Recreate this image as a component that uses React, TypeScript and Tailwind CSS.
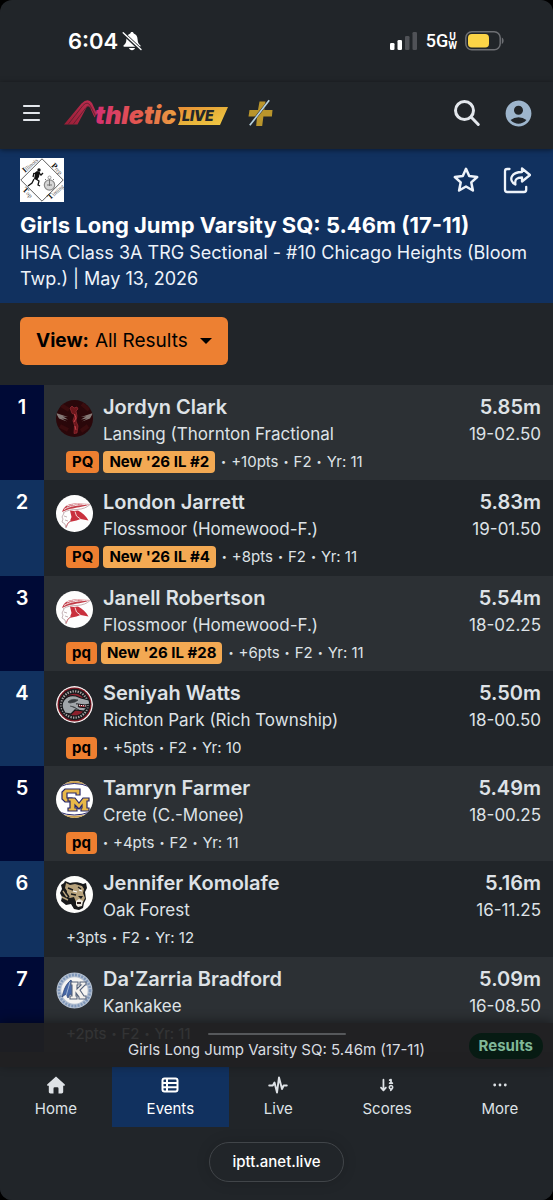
import { Fragment, useState } from "react";
import type { ReactNode } from "react";
import { MdAccountCircle } from "react-icons/md";
import { FaArrowDown19 } from "react-icons/fa6";

type Result = {
  place: number;
  name: string;
  school: string;
  metric: string;
  imperial: string;
  badge?: string;
  rank?: string;
  details: string[];
  logo: ReactNode;
};

function Avatar({ label, children }: { label: string; children: ReactNode }) {
  return (
    <svg viewBox="0 0 37 37" className="size-[37px] rounded-full" role="img" aria-label={label}>
      {children}
    </svg>
  );
}

function ThorntonLogo() {
  return (
    <Avatar label="Thornton Fractional">
      <rect width="37" height="37" fill="#2a070a" />
      <path d="M5 5l8 5M26 4l7 6M4 26l8 4M25 31l7-5" stroke="#3a0c0e" strokeWidth="4" />
      <path d="M14 8l2-2 2 2 3-1 1 2-2 2 1 5-1 5 2 5-1 7-3 .5.5-8-1.500-5 2-6-3-1z" fill="#6c161b" stroke="#a5333a" strokeWidth=".6" />
      <path d="M0 13l12 4-5-.5 5 3-6-1 5 3-8-3zM37 13l-12 4 5-.5-5 3 6-1-5 3 8-3z" fill="#857a77" />
      <path d="M18.500 14l1.500 4-2 4M19 26l1 4" stroke="#c8444c" fill="none" />
    </Avatar>
  );
}

function FlossmoorLogo() {
  return (
    <Avatar label="Homewood-Flossmoor">
      <rect width="37" height="37" fill="#fdfdfd" />
      <path d="M6 17C8 11 12 9 19 8.500L34 9C29 12 22 12 17 13.500 12 14 9 15.500 6 17z" fill="#c23b47" />
      <path d="M8 14.500C14 10.500 22 10 34 9M11 11c4-1.500 7-1.500 11-2" stroke="#f2dfe1" fill="none" strokeWidth="1" />
      <path d="M7 18c4-3 9-3.500 14-3.500 6-.5 10-2 13-5" stroke="#b99a9e" fill="none" strokeWidth=".8" />
      <path d="M14 15.500l4 .5 4-.5c4 2 8 5.500 10.500 10l-8-1.500-4 1.500-7 1.500 2-5z" fill="#c9303d" />
      <path d="M19 16.500l1.500 4.500 4 3" stroke="#f3d5d7" fill="none" />
      <path d="M8 18l-2 4 1 2-1 3 3 2 1 4 2-5 3-3M8 21l3 1M9 25l3 1" fill="none" stroke="#b5a0a3" strokeWidth=".8" />
      <path d="M10 32l2-4 3-2" stroke="#d0747c" fill="none" />
    </Avatar>
  );
}

function RichLogo() {
  return (
    <Avatar label="Rich Township High School">
      <circle cx="18.5" cy="18.5" r="18.5" fill="#f4eeee" />
      <circle cx="18.5" cy="18.5" r="17" fill="#7d1622" />
      <circle cx="18.5" cy="18.5" r="15.7" fill="#1a1a1d" />
      <circle cx="18.5" cy="18.5" r="13.2" fill="none" stroke="#a9a5a6" strokeWidth="2.200" strokeDasharray="1.300 1.300" />
      <circle cx="18.5" cy="18.5" r="10.8" fill="#8c1f2c" />
      <path d="M8 14c3-4 8-5 12-4l5 2 8 2 1 4-5 1-8-1 2 3 8 1-3 3-9-1-4 4-6-1c-3-4-4-9-1-13z" fill="#a1a6aa" stroke="#15171a" strokeWidth="1.2" />
      <path d="M12 16c3-3 6-3 10-2l-3 2-5 1zM14 20l4 1 5 3" fill="#383c40" stroke="#383c40" strokeWidth=".8" />
      <path d="M21 19l9 1" stroke="#fff" strokeDasharray="1 1" />
    </Avatar>
  );
}

function CreteLogo() {
  return (
    <Avatar label="Crete-Monee">
      <rect width="37" height="37" fill="#fff" />
      <path d="M3 3Q18-2 34 3M3 34q15 5 31 0" fill="none" stroke="#c9a04f" strokeWidth="3.400" />
      <path d="M3 6Q18-1 34 6M3 31q15 6 31 0" fill="none" stroke="#27256b" strokeWidth="1" />
      <path d="M9 8h15v6h-4v-2h-9v5h5v4H9l-3-3v-7z" fill="#e8b848" stroke="#28286a" strokeWidth="1.2" />
      <path d="M12 17h7l4 5 4-5h6v3h-2v7h2v3h-8v-3h1v-3l-3 4-4-4v3h2v3h-9v-3h2v-7h-2z" fill="#e8b848" stroke="#28286a" strokeWidth="1.2" />
    </Avatar>
  );
}

function OakForestLogo() {
  return (
    <Avatar label="Oak Forest">
      <rect width="37" height="37" fill="#fdfdfb" />
      <path d="M9 5l5 2c4-1 9-1 13 1l3-1 1 5-2 4 1 7-2 4-1 5-4 2-5-1-3-5-5 1-5-4 1-4-2-4 2-4-1-4 3-2z" fill="#18191a" />
      <path d="M10 7l4 2 5-1 7 2 2 3-1 4 2 5-2 4-4-2-3 2-2-5-4 1-4-2 1-5-2-3z" fill="#b7a27b" />
      <path d="M7 15l4 6M6 21l6 3" stroke="#b7a27b" strokeWidth="1.400" />
      <path d="M9 15l4 6M12 12l5 2M22 11l3 2M15 18l5 1" stroke="#18191a" strokeWidth="1.4" />
      <path d="M17 15l4 1M23 14l3 1" stroke="#fff" strokeWidth="1.2" />
      <path d="M20 25l3-2 4 2-1 5-4 1-2-2z" fill="#eee9de" />
      <path d="M22 20h5l-2 3z" fill="#18191a" />
      <path d="M21 27h4" stroke="#30211e" strokeWidth="1.8" />
    </Avatar>
  );
}

function KankakeeLogo() {
  return (
    <Avatar label="Kankakee">
      <circle cx="18.5" cy="18.5" r="18" fill="#b3bfd0" />
      <circle cx="18.5" cy="18.5" r="15.6" fill="none" stroke="#7f97b9" strokeWidth="2.600" strokeDasharray="2 1.200" />
      <circle cx="18.5" cy="18.5" r="13.2" fill="#f5f4f2" />
      <path d="M15 8c-5 4-7 9-9 17l4-3 2 4 2-4 3 2c1-7 1-11-2-16z" fill="#4868a6" stroke="#263d6e" strokeWidth=".7" />
      <path d="M14 10l-4 14" stroke="#b9c9df" strokeWidth=".8" />
      <path d="M15 10h7v3h-1v4l4-4h-1v-3h6v3h-1l-5 5 4 6h2v3h-7v-2l-3-4v3h1v3h-7v-3h2V13h-1z" fill="#f4f1ed" stroke="#55627a" strokeWidth="1.1" />
    </Avatar>
  );
}

const results: Result[] = [
  { place: 1, name: "Jordyn Clark", school: "Lansing (Thornton Fractional", metric: "5.85m", imperial: "19-02.50", badge: "PQ", rank: "New '26 IL #2", details: ["+10pts", "F2", "Yr: 11"], logo: <ThorntonLogo /> },
  { place: 2, name: "London Jarrett", school: "Flossmoor (Homewood-F.)", metric: "5.83m", imperial: "19-01.50", badge: "PQ", rank: "New '26 IL #4", details: ["+8pts", "F2", "Yr: 11"], logo: <FlossmoorLogo /> },
  { place: 3, name: "Janell Robertson", school: "Flossmoor (Homewood-F.)", metric: "5.54m", imperial: "18-02.25", badge: "pq", rank: "New '26 IL #28", details: ["+6pts", "F2", "Yr: 11"], logo: <FlossmoorLogo /> },
  { place: 4, name: "Seniyah Watts", school: "Richton Park (Rich Township)", metric: "5.50m", imperial: "18-00.50", badge: "pq", details: ["+5pts", "F2", "Yr: 10"], logo: <RichLogo /> },
  { place: 5, name: "Tamryn Farmer", school: "Crete (C.-Monee)", metric: "5.49m", imperial: "18-00.25", badge: "pq", details: ["+4pts", "F2", "Yr: 11"], logo: <CreteLogo /> },
  { place: 6, name: "Jennifer Komolafe", school: "Oak Forest", metric: "5.16m", imperial: "16-11.25", details: ["+3pts", "F2", "Yr: 12"], logo: <OakForestLogo /> },
  { place: 7, name: "Da'Zarria Bradford", school: "Kankakee", metric: "5.09m", imperial: "16-08.50", details: ["+2pts", "F2", "Yr: 11"], logo: <KankakeeLogo /> },
];

function StatusBar() {
  return (
    <div className="flex h-[82px] items-center justify-between pr-12 pl-[68px] text-white">
      <div className="flex items-center gap-1">
        <span className="text-[22px] leading-7 font-semibold">6:04</span>
        <svg viewBox="0 0 20 20" className="size-5" aria-label="Silent mode">
          <path d="M10 1c-1 0-1.6.7-1.7 1.6C5.500 3.500 4.500 6 4.400 8.500c-.1 3-1 4.300-2.700 5.700-.6.600-.3 1.500.5 1.500h15.600c.8 0 1.100-.9.500-1.500-1.700-1.400-2.600-2.700-2.700-5.700-.1-2.500-1.100-5-3.900-5.900C11.600 1.700 11 1 10 1zM7 17h6c-.4 1.400-1.500 2.200-3 2.200S7.400 18.400 7 17z" fill="currentColor" />
          <path d="M1.500 2.500l17 16" stroke="#212529" strokeWidth="3.600" />
          <path d="M1.200 1.700l17.800 16.800" stroke="currentColor" strokeWidth="1.400" strokeLinecap="round" />
        </svg>
      </div>
      <div className="flex items-center">
        <svg viewBox="0 0 28 18" className="h-[18px] w-7" aria-label="Signal">
          <rect x="0" y="11" width="4.500" height="7" rx="1.300" fill="#fff" />
          <rect x="7.500" y="8" width="4.500" height="10" rx="1.300" fill="#fff" />
          <rect x="15" y="4" width="4.500" height="14" rx="1.300" fill="#505257" />
          <rect x="22.500" y="0" width="4.500" height="18" rx="1.300" fill="#505257" />
        </svg>
        <span className="ml-2 font-['Roboto',sans-serif] text-[18px] leading-5 font-medium">5G</span>
        <span className="flex flex-col text-center font-['Roboto',sans-serif] text-[10px] leading-[9px] font-bold">
          <span>U</span>
          <span>W</span>
        </span>
        <svg viewBox="0 0 40 20" className="ml-2 h-5 w-10" aria-label="Battery">
          <rect x=".8" y=".8" width="34.400" height="18" rx="6" fill="none" stroke="#6d6f73" strokeWidth="1.500" />
          <rect x="3" y="3" width="21" height="13.600" rx="3.800" fill="#fbd447" />
          <path d="M36.800 6.600c2.400.8 2.400 5.600 0 6.400z" fill="#6d6f73" />
        </svg>
      </div>
    </div>
  );
}

function BrandLogo() {
  return (
    <svg viewBox="0 0 164 36" className="h-9 w-[164px]" role="img" aria-label="AthleticLIVE">
      <defs>
        <linearGradient id="word" gradientUnits="userSpaceOnUse" x1="32" y1="0" x2="114" y2="0">
          <stop offset="0" stopColor="#d42f72" />
          <stop offset=".5" stopColor="#e35650" />
          <stop offset="1" stopColor="#eba33f" />
        </linearGradient>
        <linearGradient id="tag" x1="0" y1="0" x2="1" y2="1">
          <stop offset="0" stopColor="#e98d35" />
          <stop offset=".5" stopColor="#e7b13a" />
          <stop offset="1" stopColor="#f2cb45" />
        </linearGradient>
        <linearGradient id="track" x1="0" y1="1" x2="1" y2="0">
          <stop offset="0" stopColor="#981f36" />
          <stop offset="1" stopColor="#bf2d51" />
        </linearGradient>
      </defs>
      <g transform="translate(0 4)">
        <path d="M0 25.500L17.500 4.500Q24-1.500 28 4l5 11-2.500 3.500L26 8.500q-1.500-2-3.500 0L13.500 25.500z" fill="url(#track)" />
        <path d="M4 25.500L19 6.500q4.500-5 7.500.5l5 10M9 25.500l13-17q2.500-3 4.500 1" fill="none" stroke="#57202d" strokeWidth=".8" />
        <text x="31" y="24.500" fill="url(#word)" className="font-['Inter',sans-serif] text-[25px] font-black italic">thletic</text>
        <path d="M114 8h50l-8 18h-42q5-9 0-18z" fill="url(#tag)" />
        <text x="118" y="22" fill="#24272a" className="font-['Inter',sans-serif] text-[14px] font-black italic">LIVE</text>
      </g>
    </svg>
  );
}

function TopBar() {
  return (
    <header className="relative z-10 flex h-[67px] items-center bg-[#212529] pr-[19px] pb-[5px] pl-[21px] shadow-[0_1px_5px_rgba(0,0,0,0.5)]">
      <button type="button" aria-label="Menu" className="text-[#e3e7ec]">
        <svg viewBox="0 0 21 20" className="h-5 w-[21px]">
          <path d="M3 3h15M3 10h15M3 17h15" stroke="currentColor" strokeWidth="2.200" strokeLinecap="round" />
        </svg>
      </button>
      <a href="#home" className="ml-[22px]">
        <BrandLogo />
      </a>
      <a href="#plus" className="ml-5" aria-label="Plus membership">
        <svg viewBox="0 0 25 28" className="h-7 w-[25px]">
          <path d="M11.500 2.500h6L16.300 11h8.200l-.6 6.500h-8.500L14.200 27H8.200L9 17.500H.5L1.500 11h8.500z" fill="#b9952c" />
          <path d="M1.500 26.500L21.500 1" stroke="#212529" strokeWidth="2.600" />
          <path d="M1.800 26.300L21.200 1.300" stroke="#b7d2df" strokeWidth="1.700" />
        </svg>
      </a>
      <button type="button" aria-label="Search" className="ml-auto text-[#e3e7ec]">
        <svg viewBox="0 0 28 28" className="size-7" fill="none" stroke="currentColor" strokeWidth="3" strokeLinecap="round">
          <circle cx="11.500" cy="11.500" r="9" />
          <path d="M18.300 18.300l7 7.200" />
        </svg>
      </button>
      <button type="button" aria-label="Account" className="ml-[22px] text-[#9db5cc]">
        <MdAccountCircle className="size-[31px]" />
      </button>
    </header>
  );
}

function TimingLogo() {
  return (
    <svg viewBox="0 0 44 44" className="size-11" role="img" aria-label="Illinois Prep Top Timing">
      <rect width="44" height="44" fill="#fff" />
      <path d="M22 .8L43.200 22 22 43.200.8 22z" fill="none" stroke="#333" strokeWidth=".8" />
      <g className="font-['Liberation_Serif',serif] text-[6px]" fill="#555">
        <text transform="translate(5 15) rotate(-42)"><tspan fontSize="8" fontWeight="700" fill="#111">I</tspan>llinois</text>
        <text transform="translate(31 8) rotate(45)"><tspan fontSize="8" fontWeight="700" fill="#111">P</tspan>rep</text>
        <text transform="translate(2 32) rotate(45)"><tspan fontSize="8" fontWeight="700" fill="#111">T</tspan>op</text>
        <text transform="translate(30 42) rotate(-42)"><tspan fontSize="8" fontWeight="700" fill="#111">T</tspan>iming</text>
      </g>
      <circle cx="19" cy="12" r="1.700" fill="#111" />
      <path d="M13 16l4-3 3 1-1 5-2 3-3-1 1-5z" fill="#111" />
      <path d="M14 15l-1 4M19 15l2 2 2-2M16 21l3 2-1 4 2 1M14 21l-2 4-4 3" fill="none" stroke="#111" strokeWidth="1.300" />
      <circle cx="29.500" cy="27" r="5.200" fill="#d6d6d6" stroke="#8b8b8b" strokeWidth="1.200" />
      <circle cx="29.500" cy="19.500" r="1.500" fill="none" stroke="#999" />
      <path d="M29.500 21v7M27 27h5M25 21l1 1M34 21l-1 1" stroke="#777" />
    </svg>
  );
}

function EventHeader() {
  return (
    <section className="bg-[#11315f] px-5 pt-[9px] pb-[11px] text-[#eef3fa]">
      <div className="flex items-center pr-0.5">
        <TimingLogo />
        <button type="button" aria-label="Favorite" className="ml-auto">
          <svg viewBox="0 0 28 28" className="size-7" fill="none" stroke="currentColor" strokeWidth="2.500" strokeLinejoin="round">
            <path d="M14 2.800l3.200 7.300 8 .9-5.900 5.400 1.600 8.100-6.900-4-6.900 4 1.600-8.100L2.800 11l8-.9z" />
          </svg>
        </button>
        <button type="button" aria-label="Share" className="ml-[23px]">
          <svg viewBox="0 0 28 28" className="size-7" fill="none" stroke="currentColor" strokeWidth="2.300" strokeLinejoin="round" strokeLinecap="round">
            <path d="M6.500 3H4.200Q2 3 2 5.200v18.600Q2 26 4.200 26H21q2.200 0 2.200-2.200v-3" />
            <path d="M19 2.500L27 9l-8 6.500v-4c-5 0-7.500 1.700-6.600 7C8.300 16.300 7.500 13 9 10.300c1.800-3.300 5.500-4.300 10-4.300z" />
          </svg>
        </button>
      </div>
      <h1 className="mt-2 text-[22px] leading-[30px] font-bold text-white">Girls Long Jump Varsity SQ: 5.46m (17-11)</h1>
      <p className="text-[18px] leading-[26px]">IHSA Class 3A TRG Sectional - #10 Chicago Heights (Bloom Twp.) | May 13, 2026</p>
    </section>
  );
}

function ViewPicker() {
  return (
    <div className="flex px-5 pt-3.5 pb-5">
      <label className="flex h-12 items-center rounded-md bg-[#ed8032] px-4 text-[19px] leading-6 text-black">
        <span className="font-bold">View:</span>
        <select className="ml-1.5 appearance-none bg-transparent [field-sizing:content]" defaultValue="all">
          <option value="all">All Results</option>
        </select>
        <svg viewBox="0 0 12 6" className="ml-3 h-1.5 w-3" aria-hidden="true">
          <path d="M0 0h12L6 6z" fill="currentColor" />
        </svg>
      </label>
    </div>
  );
}

function ResultRow({ result }: { result: Result }) {
  return (
    <li className="group flex bg-[#212529] odd:bg-[#2c3034]">
      <div className="w-11 shrink-0 bg-[#11315f] pt-2 text-center text-[20px] leading-7 font-semibold text-white group-odd:bg-[#000a36]">
        {result.place}
      </div>
      <div className="min-w-0 grow pt-2 pr-3 pb-[3px] pl-3 text-[#dee2e6]">
        <div className="flex">
          <div className="shrink-0 pt-[7px]">{result.logo}</div>
          <div className="ml-2.5 min-w-0 grow">
            <h2 className="text-[20px] leading-7 font-semibold">{result.name}</h2>
            <p className="truncate text-[17px] leading-[27px]">{result.school}</p>
          </div>
          <div className="shrink-0 text-right">
            <p className="text-[20px] leading-7 font-semibold">{result.metric}</p>
            <p className="text-[17px] leading-[27px]">{result.imperial}</p>
          </div>
        </div>
        <div className="flex h-7 items-center gap-1 pl-2.5 text-[15px] leading-[22px]">
          {result.badge && (
            <span className="rounded bg-[#ee7f30] px-1.5 font-bold text-black">{result.badge}</span>
          )}
          {result.rank && (
            <span className="rounded bg-[#f3a953] px-1.5 font-bold text-black">{result.rank}</span>
          )}
          <span className="flex items-center">
            {result.details.map((detail, index) => (
              <Fragment key={detail}>
                {index > 0 && <span className="px-[5px] text-[9px]">•</span>}
                {index === 0 && result.badge && <span className="pr-[5px] pl-0.5 text-[9px]">•</span>}
                <span>{detail}</span>
              </Fragment>
            ))}
          </span>
        </div>
      </div>
    </li>
  );
}

const tabs: { label: string; icon: ReactNode }[] = [
  {
    label: "Home",
    icon: (
      <svg viewBox="0 0 20 20" className="size-5">
        <path d="M10 1.500l8.600 7.700c.7.700.2 1.600-.6 1.600h-.8v6c0 1-.7 1.700-1.700 1.700h-3v-5q0-1.200-1.200-1.200H8.700q-1.200 0-1.200 1.200v5h-3c-1 0-1.700-.7-1.700-1.700v-6H2c-.8 0-1.300-.9-.6-1.600z" fill="currentColor" />
      </svg>
    ),
  },
  {
    label: "Events",
    icon: (
      <svg viewBox="0 0 20 20" className="size-5" fill="none" stroke="currentColor" strokeWidth="2">
        <rect x="2.500" y="3.500" width="15" height="13" rx="2" />
        <path d="M2.500 7.900h15M2.500 12.200h15M7 3.500v13" />
      </svg>
    ),
  },
  {
    label: "Live",
    icon: (
      <svg viewBox="0 0 20 20" className="size-5" fill="none" stroke="currentColor" strokeWidth="1.900" strokeLinecap="round" strokeLinejoin="round">
        <path d="M1.200 10.500h3.600l1.700-3 2.500 10L11 2.500l3 11.500 1.600-3.500h3.200" />
      </svg>
    ),
  },
  { label: "Scores", icon: <FaArrowDown19 className="my-0.5 size-4" /> },
  {
    label: "More",
    icon: (
      <svg viewBox="0 0 20 20" className="size-5" fill="currentColor">
        <circle cx="4.700" cy="10" r="1.400" />
        <circle cx="10" cy="10" r="1.400" />
        <circle cx="15.300" cy="10" r="1.400" />
      </svg>
    ),
  },
];

function BottomBar() {
  const [active, setActive] = useState("Events");
  return (
    <footer className="sticky bottom-0 z-20 bg-[#212529]">
      <div className="absolute inset-x-0 bottom-full h-11 bg-[#202021]/90 shadow-[0_-2px_10px_rgba(0,0,0,0.4)]">
        <div className="mx-auto mt-2.5 h-0.5 w-[138px] rounded-full bg-[#56585b]" />
        <p className="text-center text-[15px] leading-[30px] text-[#d9dde1]">Girls Long Jump Varsity SQ: 5.46m (17-11)</p>
        <span className="absolute top-2.5 right-2.5 rounded-full bg-[#071b13] px-2.5 text-[15px] leading-[26px] font-bold text-[#80b898]">Results</span>
      </div>
      <nav className="flex h-15">
        {tabs.map((tab) => (
          <button
            key={tab.label}
            type="button"
            onClick={() => setActive(tab.label)}
            className={
              active === tab.label
                ? "flex flex-auto flex-col items-center bg-[#11315f] pt-2 text-white"
                : "flex flex-auto flex-col items-center pt-2 text-[#dee2e6]"
            }
          >
            {tab.icon}
            <span className="mt-0.5 text-[15px] leading-6">{tab.label}</span>
          </button>
        ))}
      </nav>
      <div className="flex h-[73px] justify-center pt-[15px]">
        <button type="button" className="h-10 rounded-full border border-[#414549] px-[22px] text-[15px] font-medium text-white shadow-[0_0_14px_rgba(0,0,0,0.15)]">
          iptt.anet.live
        </button>
      </div>
    </footer>
  );
}

export default function App() {
  return (
    <div className="bg-black">
      <div className="flex min-h-screen flex-col overflow-clip rounded-xl bg-[#212529] font-['Inter',sans-serif]">
        <StatusBar />
        <TopBar />
        <EventHeader />
        <ViewPicker />
        <ol className="grid grow auto-rows-fr pb-[15px]">
          {results.map((result) => (
            <ResultRow key={result.place} result={result} />
          ))}
        </ol>
        <BottomBar />
      </div>
    </div>
  );
}
